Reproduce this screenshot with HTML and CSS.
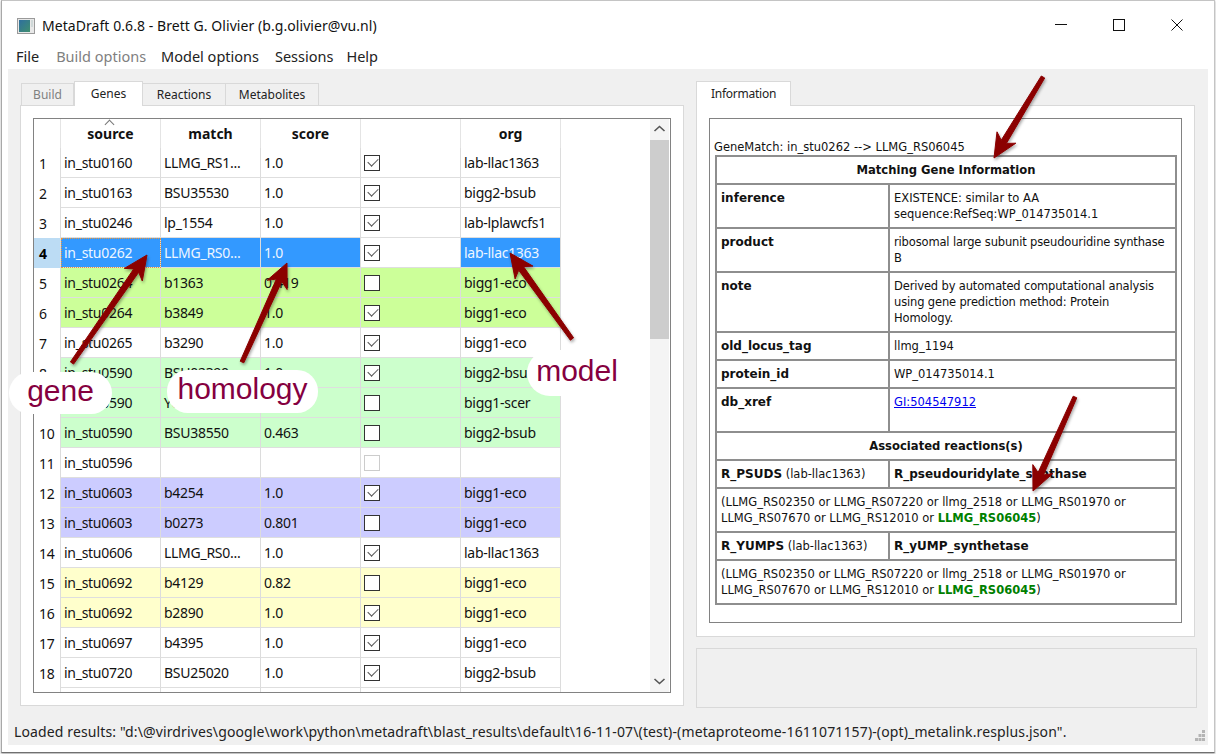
FILE: index.html
```html
<!DOCTYPE html>
<html lang="en">
<head>
<meta charset="utf-8">
<title>MetaDraft 0.6.8</title>
<link rel="stylesheet" href="styles.css">
</head>
<body>
<div class="window">
  <header class="titlebar">
    <svg class="appicon" width="18" height="16" viewBox="0 0 18 16"><defs><linearGradient id="ai" x1="0" y1="0" x2="1" y2="1"><stop offset="0" stop-color="#2f6f9f"/><stop offset="1" stop-color="#3f8f6f"/></linearGradient></defs><rect x=".5" y=".5" width="17" height="15" fill="#e8e8e8" stroke="#9a9a9a"/><rect x="2" y="2" width="11" height="12" fill="url(#ai)"/><rect x="14" y="2" width="2" height="7" fill="#cfd8d8"/></svg>
    <span class="apptitle">MetaDraft 0.6.8 - Brett G. Olivier (b.g.olivier@vu.nl)</span>
    <div class="winctl">
      <svg width="12" height="12" viewBox="0 0 12 12"><path d="M0 5.5H12" stroke="#111"/></svg>
      <svg width="12" height="12" viewBox="0 0 12 12"><rect x=".5" y=".5" width="11" height="11" fill="none" stroke="#111"/></svg>
      <svg width="12" height="12" viewBox="0 0 12 12"><path d="M.5 .5L11.5 11.5M11.5 .5L.5 11.5" stroke="#111"/></svg>
    </div>
  </header>
  <nav class="menubar">
    <span class="m-file">File</span><span class="m-build disabled">Build options</span><span>Model options</span><span class="m-sessions">Sessions</span><span>Help</span>
  </nav>
  <main class="client">
    <div class="content">
      <section class="col-left">
        <div class="tabs">
          <span class="tab tab-build off">Build</span>
          <span class="tab tab-genes active">Genes</span>
          <span class="tab tab-reactions">Reactions</span>
          <span class="tab tab-metab">Metabolites</span>
        </div>
        <div class="pane pane-left">
          <div class="frame gridframe">
            <div class="gridclip">
              <table class="grid">
                <thead>
                  <tr><th class="rh"></th><th class="sorted">source</th><th>match</th><th>score</th><th></th><th>org</th></tr>
                </thead>
                <tbody>
                  <tr><td class="rh">1</td><td>in_stu0160</td><td>LLMG_RS1...</td><td>1.0</td><td class="cb"><i class="check on"></i></td><td>lab-llac1363</td></tr>
                  <tr><td class="rh">2</td><td>in_stu0163</td><td>BSU35530</td><td>1.0</td><td class="cb"><i class="check on"></i></td><td>bigg2-bsub</td></tr>
                  <tr><td class="rh">3</td><td>in_stu0246</td><td>lp_1554</td><td>1.0</td><td class="cb"><i class="check on"></i></td><td>lab-lplawcfs1</td></tr>
                  <tr class="sel"><td class="rh">4</td><td class="focus">in_stu0262</td><td>LLMG_RS0...</td><td>1.0</td><td class="cb"><i class="check on"></i></td><td>lab-llac1363</td></tr>
                  <tr class="lime"><td class="rh">5</td><td>in_stu0264</td><td>b1363</td><td>0.419</td><td class="cb"><i class="check"></i></td><td>bigg1-eco</td></tr>
                  <tr class="lime"><td class="rh">6</td><td>in_stu0264</td><td>b3849</td><td>1.0</td><td class="cb"><i class="check on"></i></td><td>bigg1-eco</td></tr>
                  <tr><td class="rh">7</td><td>in_stu0265</td><td>b3290</td><td>1.0</td><td class="cb"><i class="check on"></i></td><td>bigg1-eco</td></tr>
                  <tr class="mint"><td class="rh">8</td><td>in_stu0590</td><td>BSU02390</td><td>1.0</td><td class="cb"><i class="check on"></i></td><td>bigg2-bsub</td></tr>
                  <tr class="mint"><td class="rh">9</td><td>in_stu0590</td><td>YGR...</td><td>0.5</td><td class="cb"><i class="check"></i></td><td>bigg1-scer</td></tr>
                  <tr class="mint"><td class="rh">10</td><td>in_stu0590</td><td>BSU38550</td><td>0.463</td><td class="cb"><i class="check"></i></td><td>bigg2-bsub</td></tr>
                  <tr><td class="rh">11</td><td>in_stu0596</td><td></td><td></td><td class="cb"><i class="check dis"></i></td><td></td></tr>
                  <tr class="lav"><td class="rh">12</td><td>in_stu0603</td><td>b4254</td><td>1.0</td><td class="cb"><i class="check on"></i></td><td>bigg1-eco</td></tr>
                  <tr class="lav"><td class="rh">13</td><td>in_stu0603</td><td>b0273</td><td>0.801</td><td class="cb"><i class="check"></i></td><td>bigg1-eco</td></tr>
                  <tr><td class="rh">14</td><td>in_stu0606</td><td>LLMG_RS0...</td><td>1.0</td><td class="cb"><i class="check on"></i></td><td>lab-llac1363</td></tr>
                  <tr class="lem"><td class="rh">15</td><td>in_stu0692</td><td>b4129</td><td>0.82</td><td class="cb"><i class="check"></i></td><td>bigg1-eco</td></tr>
                  <tr class="lem"><td class="rh">16</td><td>in_stu0692</td><td>b2890</td><td>1.0</td><td class="cb"><i class="check on"></i></td><td>bigg1-eco</td></tr>
                  <tr><td class="rh">17</td><td>in_stu0697</td><td>b4395</td><td>1.0</td><td class="cb"><i class="check on"></i></td><td>bigg1-eco</td></tr>
                  <tr><td class="rh">18</td><td>in_stu0720</td><td>BSU25020</td><td>1.0</td><td class="cb"><i class="check on"></i></td><td>bigg2-bsub</td></tr>
                  <tr><td class="rh"></td><td></td><td></td><td></td><td></td><td></td></tr>
                </tbody>
              </table>
            </div>
            <div class="scrollbar">
              <svg class="sb-arrow" width="19" height="21" viewBox="0 0 19 21"><path d="M4.5 12L9.5 7.5L14.5 12" fill="none" stroke="#555" stroke-width="1.6"/></svg>
              <div class="sb-thumb"></div>
              <div class="sb-track"></div>
              <svg class="sb-arrow" width="19" height="21" viewBox="0 0 19 21"><path d="M4.5 8L9.5 12.500L14.500 8" fill="none" stroke="#555" stroke-width="1.6"/></svg>
            </div>
          </div>
        </div>
      </section>
      <section class="col-right">
        <div class="tabs">
          <span class="tab tab-info active">Information</span>
        </div>
        <div class="pane pane-right">
          <div class="frame infoframe">
            <p class="genematch">GeneMatch: in_stu0262 --&gt; LLMG_RS06045</p>
            <table class="info">
              <colgroup><col class="c1"><col></colgroup>
              <tr class="h28"><th colspan="2">Matching Gene Information</th></tr>
              <tr class="h44"><td><b>inference</b></td><td>EXISTENCE: similar to AA<br>sequence:RefSeq:WP_014735014.1</td></tr>
              <tr class="h44"><td><b>product</b></td><td class="prose">ribosomal large subunit pseudouridine synthase<br>B</td></tr>
              <tr class="h60"><td><b>note</b></td><td class="prose">Derived by automated computational analysis<br>using gene prediction method: Protein<br>Homology.</td></tr>
              <tr class="h28"><td><b>old_locus_tag</b></td><td>llmg_1194</td></tr>
              <tr class="h28"><td><b>protein_id</b></td><td>WP_014735014.1</td></tr>
              <tr class="h44"><td><b>db_xref</b></td><td><a href="#">GI:504547912</a></td></tr>
              <tr class="h28"><th colspan="2">Associated reactions(s)</th></tr>
              <tr class="h28"><td><b>R_PSUDS</b> (lab-llac1363)</td><td><b>R_pseudouridylate_synthase</b></td></tr>
              <tr class="h44"><td colspan="2">(LLMG_RS02350 or LLMG_RS07220 or llmg_2518 or LLMG_RS01970 or<br>LLMG_RS07670 or LLMG_RS12010 or <b class="hit">LLMG_RS06045</b>)</td></tr>
              <tr class="h28"><td><b>R_YUMPS</b> (lab-llac1363)</td><td><b>R_yUMP_synthetase</b></td></tr>
              <tr class="h44"><td colspan="2">(LLMG_RS02350 or LLMG_RS07220 or llmg_2518 or LLMG_RS01970 or<br>LLMG_RS07670 or LLMG_RS12010 or <b class="hit">LLMG_RS06045</b>)</td></tr>
            </table>
          </div>
        </div>
        <div class="lowerbox"></div>
      </section>
    </div>
    <footer class="status">
      <span>Loaded results: "d:\@virdrives\google\work\python\metadraft\blast_results\default\16-11-07\(test)-(metaproteome-1611071157)-(opt)_metalink.resplus.json".</span>
      <svg class="grip" width="10" height="11" viewBox="0 0 10 11" fill="#b4b4b4"><rect x="7" y="0" width="3" height="3"/><rect x="3.500" y="4" width="3" height="3"/><rect x="7" y="4" width="3" height="3"/><rect x="0" y="8" width="3" height="3"/><rect x="3.500" y="8" width="3" height="3"/><rect x="7" y="8" width="3" height="3"/></svg>
    </footer>
  </main>
</div>

<span class="note note-gene">gene</span>
<span class="note note-homology">homology</span>
<span class="note note-model">model</span>
<svg class="arrows" width="1216" height="754" viewBox="0 0 1216 754">
  <defs><filter id="sh" x="-20%" y="-20%" width="140%" height="140%"><feDropShadow dx="1" dy="2" stdDeviation="1.500" flood-color="#000" flood-opacity=".35"/></filter></defs>
  <g class="arrowset" filter="url(#sh)">
    <polygon points="147,255 142.300,281 138.700,272.300 73.600,364.100 70.400,361.900 133.700,268.900 124.300,268.400"/>
    <polygon points="287,263 287.100,289.500 281.800,281.500 243.800,362.800 240.200,361.200 276.400,279.100 267.100,280.300"/>
    <polygon points="510,253 532.900,266.100 523.500,266.600 573.600,337.800 570.400,340.200 518.700,270.200 515.100,278.900"/>
    <polygon points="994,158 1015.800,143.200 1006.400,143.400 1044.700,78 1041.300,76 1001.200,140.200 997,131.800"/>
    <polygon points="1033,491 1052.800,473.600 1043.500,474.900 1076.800,397.800 1073.200,396.200 1038.100,472.500 1032.800,464.600"/>
  </g>
</svg>
</body>
</html>
```
FILE: styles.css
```css
* { box-sizing: border-box; }
html, body { margin: 0; padding: 0; width: 1216px; height: 754px; overflow: hidden; background: #fff; }
body { font-family: "Noto Sans", "Open Sans", sans-serif; color: #111; position: relative; }

.window {
  margin-left: 1px;
  width: 1214px;
  height: 753px;
  border: 1px solid #c4c4c4;
  border-bottom-color: #707070;
  border-left-color: #a8a8a8;
  background: #fff;
  box-shadow: 0 1px 2px rgba(0,0,0,.35);
  display: flex;
  flex-direction: column;
}

.titlebar { display: flex; align-items: center; height: 22px; margin-top: 14px; padding-left: 15px; flex: none; }
.appicon { flex: none; }
.apptitle { margin-left: 7px; font-size: 14px; line-height: 22px; letter-spacing: .06px; }
.winctl { margin-left: auto; display: flex; gap: 46px; padding-right: 31px; margin-top: -3px; }
.winctl svg { display: block; }

.menubar { display: flex; flex: none; height: 32px; padding: 8px 0 0 14px; font-size: 14.500px; line-height: 22px; color: #222; }
.menubar span { margin-right: 16px; }
.menubar .m-file { margin-right: 17px; }
.menubar .m-build { margin-right: 15px; }
.menubar .m-sessions { margin-right: 13px; }
.menubar .disabled { color: #808080; }

.client { margin-left: 6px; width: 1200px; height: 676px; background: #f0f0f0; display: flex; flex-direction: column; flex: none; }
.content { display: flex; align-items: flex-start; gap: 12px; padding: 12px 0 0 12px; flex: none; height: 649px; }

.col-left { width: 664px; flex: none; }
.col-right { width: 501px; flex: none; }

.tabs { display: flex; height: 24px; align-items: flex-end; position: relative; z-index: 1; }
.tab { display: flex; align-items: center; justify-content: center; height: 22px; font-size: 12px; border: 1px solid #d9d9d9; border-bottom: 0; border-left-width: 0; background: #f0f0f0; color: #222; }
.tab.off { color: #808080; border-left-width: 1px; margin-left: 1px; }
.tab.active { height: 25px; margin-bottom: -1px; padding-bottom: 2px; background: #fff; border-left-width: 1px; }
.tab-build { width: 53px; }
.tab-genes { width: 69px; }
.tab-reactions { width: 83px; }
.tab-metab { width: 93px; }
.tab-info { width: 95px; letter-spacing: -.02em; }

.pane { background: #fff; border: 1px solid #d9d9d9; padding: 12px; }
.pane-left { height: 601px; }
.pane-right { width: 499px; height: 532px; }

.frame { border: 1px solid #828282; background: #fff; }
.gridframe { height: 575px; display: flex; }
.gridclip { flex: 1; overflow: hidden; min-width: 0; }

.grid { border-collapse: separate; border-spacing: 0; table-layout: fixed; width: 527px; font-size: 14px; letter-spacing: -.02em; }
.grid th, .grid td { padding: 0 0 0 3px; height: 30px; border-right: 1px solid #dcdcdc; border-bottom: 1px solid #dedede; white-space: nowrap; overflow: hidden; font-weight: 400; text-align: left; width: 100px; }
.grid th { height: 29px; text-align: center; font-weight: 700; font-size: 14px; border-bottom: 0; border-right-color: #e4e4e4; padding: 0; letter-spacing: 0; position: relative; }
.grid .rh { width: 27px; padding-left: 5px; border-bottom: 0; }
.grid td.rh { padding-top: 1px; }
.grid .sorted::before { content: ""; position: absolute; left: 45px; top: 2px; width: 6px; height: 6px; border-left: 1px solid #777; border-top: 1px solid #777; transform: rotate(45deg); }
.cb { padding-left: 3px !important; }
.check { display: block; width: 16px; height: 16px; border: 1px solid #333; background: #fff; position: relative; }
.check.on::after { content: ""; position: absolute; left: 2.500px; top: 2.500px; width: 9px; height: 5px; border-left: 1.500px solid #555; border-bottom: 1.500px solid #555; transform: rotate(-45deg); }
.check.dis { border-color: #ccc; }

.lime td:not(.rh) { background: #ccff99; }
.mint td:not(.rh) { background: #ccffcc; }
.lav td:not(.rh) { background: #ccccff; }
.lem td:not(.rh) { background: #ffffcc; }
.sel td:not(.rh):not(.cb) { background: #3399ff; color: #eef6ff; }
.sel td.rh { background: #bcdcf4; font-weight: 700; color: #000; }
.sel td.focus { outline: 1px dotted #e8963c; outline-offset: -1px; }

.scrollbar { width: 19px; margin-right: 1px; background: #f4f4f4; display: flex; flex-direction: column; flex: none; }
.sb-arrow { display: block; flex: none; }
.sb-thumb { height: 199px; background: #cdcdcd; flex: none; }
.sb-track { flex: 1; }

.infoframe { height: 505px; padding: 20px 0 0 4px; font-family: "DejaVu Sans", sans-serif; font-size: 11.500px; line-height: 16px; color: #111; }
.genematch { margin: 0; height: 16px; white-space: nowrap; }
.info { border-collapse: collapse; table-layout: fixed; width: 462px; margin-left: 1px; }
.info .c1 { width: 173px; }
.info th, .info td { border: 2px solid #8e8e8e; padding: 5px 4px 0; vertical-align: top; white-space: nowrap; text-align: left; }
.info th { text-align: center; font-weight: 700; font-size: 11.600px; }
.info td b { font-size: 12px; }
.info td b.hit { font-size: 11.500px; color: #008000; }
.info td.prose { letter-spacing: -.15px; }
.h28 { height: 28px; }
.h44 { height: 44px; }
.h60 { height: 60px; }
.info a { color: #0000ee; }

.lowerbox { margin-top: 11px; height: 60px; border: 1px solid #d9d9d9; background: #f0f0f0; }

.status { display: flex; align-items: center; height: 27px; padding: 0 3px 0 6px; font-size: 14px; letter-spacing: .13px; color: #222; position: relative; white-space: nowrap; }
.grip { position: absolute; right: 3px; bottom: 4px; }

.note { position: absolute; background: #fff; color: #85003f; font-family: "Liberation Sans", sans-serif; font-size: 30px; line-height: 38px; height: 42px; border-radius: 21px; text-align: center; }
.note-gene { left: 9px; top: 372px; width: 103px; }
.note-homology { left: 167px; top: 370px; width: 151px; height: 43px; }
.note-model { left: 527px; top: 350px; width: 100px; height: 46px; line-height: 42px; border-radius: 23px; }
.arrows { position: absolute; left: 0; top: 0; pointer-events: none; }
.arrowset polygon { fill: #8b0000; stroke: #8b0000; stroke-width: 1; stroke-linejoin: round; }
```
